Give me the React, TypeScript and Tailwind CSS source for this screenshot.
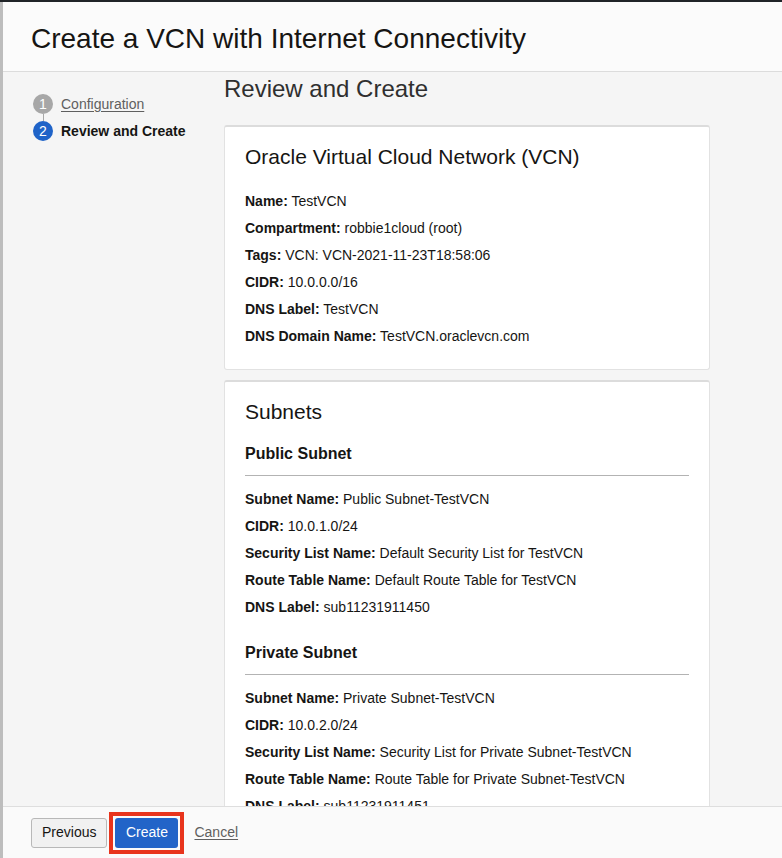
const vcnRows: [string, string][] = [
  ['Name:', 'TestVCN'],
  ['Compartment:', 'robbie1cloud (root)'],
  ['Tags:', 'VCN: VCN-2021-11-23T18:58:06'],
  ['CIDR:', '10.0.0.0/16'],
  ['DNS Label:', 'TestVCN'],
  ['DNS Domain Name:', 'TestVCN.oraclevcn.com'],
]

const subnets: { title: string; rows: [string, string][] }[] = [
  {
    title: 'Public Subnet',
    rows: [
      ['Subnet Name:', 'Public Subnet-TestVCN'],
      ['CIDR:', '10.0.1.0/24'],
      ['Security List Name:', 'Default Security List for TestVCN'],
      ['Route Table Name:', 'Default Route Table for TestVCN'],
      ['DNS Label:', 'sub11231911450'],
    ],
  },
  {
    title: 'Private Subnet',
    rows: [
      ['Subnet Name:', 'Private Subnet-TestVCN'],
      ['CIDR:', '10.0.2.0/24'],
      ['Security List Name:', 'Security List for Private Subnet-TestVCN'],
      ['Route Table Name:', 'Route Table for Private Subnet-TestVCN'],
      ['DNS Label:', 'sub11231911451'],
    ],
  },
]

function Rows({ rows }: { rows: [string, string][] }) {
  return (
    <div className="flex flex-col">
      {rows.map(([label, value]) => (
        <div key={label + value} className="text-[14px] leading-[27px] whitespace-nowrap">
          <span className="font-bold">{label}</span> {value}
        </div>
      ))}
    </div>
  )
}

export default function App() {
  return (
    <div
      className="w-[782px] h-[858px] border-t-2 border-[#202428] overflow-hidden text-[#161513]"
      style={{ fontFamily: '"Liberation Sans", Arial, Helvetica, sans-serif' }}
    >
      <div className="h-full flex flex-col border-l-[3px] border-[#bdbdbd]">

        {/* HEADER */}
        <div className="h-[70px] shrink-0 bg-[#fbfbfb] border-b border-[#dcdcdc] pl-[28px] pt-[20px]">
          <h1 className="text-[28px] leading-[34px] font-normal">Create a VCN with Internet Connectivity</h1>
        </div>

        {/* BODY */}
        <div className="flex-1 min-h-0 flex bg-[#f5f5f5] overflow-hidden">

          {/* STEPS */}
          <div className="w-[221px] shrink-0 pl-[30px] pt-[22px] flex flex-col">
            <div className="flex items-center h-[20px]">
              <span className="w-[20px] h-[20px] rounded-full bg-[#a7a7a7] text-white text-[14px] flex items-center justify-center">1</span>
              <span className="ml-[8px] text-[14px] text-[#5f5f5f] underline underline-offset-2">Configuration</span>
            </div>
            <div className="w-px h-[7px] bg-[#a7a7a7] ml-[10px]" />
            <div className="flex items-center h-[20px]">
              <span className="w-[20px] h-[20px] rounded-full bg-[#1f63c8] text-white text-[14px] flex items-center justify-center">2</span>
              <span className="ml-[8px] text-[14px] font-bold">Review and Create</span>
            </div>
          </div>

          {/* REVIEW */}
          <div className="flex-1 pt-[3px]">
            <h2 className="text-[24px] leading-[28px] text-[#2f2f2f] mb-[22px]">Review and Create</h2>

            <div className="w-[486px] bg-white border border-[#e2e2e2] border-t-2 border-t-[#dcdcdc] rounded-[3px] px-[20px] pt-[17px] pb-[19px]">
              <h3 className="text-[21px] leading-[26px] mb-[18px]">Oracle Virtual Cloud Network (VCN)</h3>
              <Rows rows={vcnRows} />
            </div>

            <div className="w-[486px] mt-[10px] bg-white border border-[#e2e2e2] border-t-2 border-t-[#dcdcdc] rounded-[3px] px-[20px] pt-[17px] pb-[20px]">
              <h3 className="text-[21px] leading-[26px]">Subnets</h3>
              {subnets.map((s, i) => (
                <div key={s.title} className={i === 0 ? 'mt-[19px]' : 'mt-[22px]'}>
                  <h4 className="text-[16px] leading-[20px] font-bold">{s.title}</h4>
                  <div className="mt-[11px] mb-[10px] border-t border-[#b3b3b3]" />
                  <Rows rows={s.rows} />
                </div>
              ))}
            </div>
          </div>
        </div>

        {/* FOOTER */}
        <div className="h-[52px] shrink-0 bg-[#fafafa] border-t border-[#dedede] pl-[28px] flex items-center">
          <button className="h-[30px] px-[10px] bg-[#f1f1f1] border border-[#b8b8b8] rounded-[3px] text-[14px] text-[#161513]">
            Previous
          </button>
          <div className="relative ml-[8px]">
            <button className="h-[30px] w-[63px] bg-[#2264c8] rounded-[3px] text-[14px] text-white">
              Create
            </button>
            <span className="absolute -left-[6px] -right-[6px] -top-[6px] -bottom-[6px] border-4 border-[#e8341c] pointer-events-none" />
          </div>
          <a className="ml-[16px] text-[14px] text-[#5f5f5f] underline underline-offset-2 cursor-pointer">Cancel</a>
        </div>

      </div>
    </div>
  )
}
